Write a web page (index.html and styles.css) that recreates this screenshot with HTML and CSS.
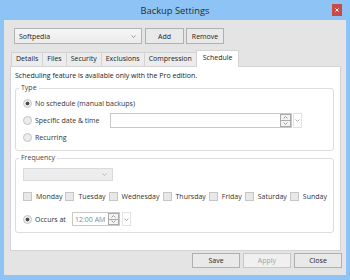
FILE: index.html
```html
<!DOCTYPE html>
<html lang="en">
<head>
    <meta charset="UTF-8">
    <title>Backup Settings</title>
    <link rel="stylesheet" href="styles.css">
</head>
<body>
    <div class="window">
        <div class="titlebar">
            <span class="title">Backup Settings</span>
            <span class="close-btn">
                <svg width="4" height="4" viewBox="0 0 4 4"><path d="M0.5 0.5 L3.5 3.5 M3.5 0.5 L0.5 3.5" stroke="#fff" stroke-width="1"/></svg>
            </span>
        </div>

        <div class="client">
            <div class="profile-row">
                <div class="combo">
                    <span>Softpedia</span>
                    <svg class="chev" width="5" height="3" viewBox="0 0 5 3"><path d="M0.5 0.5 L2.5 2.5 L4.5 0.5" fill="none" stroke="#888" stroke-width="0.8"/></svg>
                </div>
                <button class="btn btn-add">Add</button>
                <button class="btn btn-remove">Remove</button>
            </div>

            <div class="tabs">
                <div class="tab">Details</div>
                <div class="tab">Files</div>
                <div class="tab">Security</div>
                <div class="tab">Exclusions</div>
                <div class="tab">Compression</div>
                <div class="tab active">Schedule</div>
            </div>

            <div class="tab-panel">
                <p class="note">Scheduling feature is available only with the Pro edition.</p>

                <fieldset class="group type-group">
                    <legend>Type</legend>
                    <div class="opt">
                        <span class="radio checked"></span>
                        <span>No schedule (manual backups)</span>
                    </div>
                    <div class="opt">
                        <span class="radio"></span>
                        <span class="opt-label">Specific date &amp; time</span>
                        <div class="field date-field">
                            <span class="field-text"></span>
                            <span class="spin">
                                <span class="spin-half"><svg width="5" height="3" viewBox="0 0 5 3"><path d="M0.5 2.5 L2.5 0.5 L4.5 2.5" fill="none" stroke="#888" stroke-width="0.8"/></svg></span>
                                <span class="spin-half"><svg width="5" height="3" viewBox="0 0 5 3"><path d="M0.5 0.5 L2.5 2.5 L4.5 0.5" fill="none" stroke="#888" stroke-width="0.8"/></svg></span>
                            </span>
                        </div>
                        <span class="drop"><svg width="5" height="3" viewBox="0 0 5 3"><path d="M0.5 0.5 L2.5 2.5 L4.5 0.5" fill="none" stroke="#999" stroke-width="0.8"/></svg></span>
                    </div>
                    <div class="opt">
                        <span class="radio"></span>
                        <span>Recurring</span>
                    </div>
                </fieldset>

                <fieldset class="group freq-group">
                    <legend>Frequency</legend>
                    <div class="combo combo-disabled">
                        <svg class="chev" width="5" height="3" viewBox="0 0 5 3"><path d="M0.5 0.5 L2.5 2.5 L4.5 0.5" fill="none" stroke="#aaa" stroke-width="0.8"/></svg>
                    </div>
                    <div class="days">
                        <span class="day"><span class="check"></span>Monday</span>
                        <span class="day"><span class="check"></span>Tuesday</span>
                        <span class="day"><span class="check"></span>Wednesday</span>
                        <span class="day"><span class="check"></span>Thursday</span>
                        <span class="day"><span class="check"></span>Friday</span>
                        <span class="day"><span class="check"></span>Saturday</span>
                        <span class="day"><span class="check"></span>Sunday</span>
                    </div>
                    <div class="opt occurs">
                        <span class="radio checked"></span>
                        <span class="occurs-label">Occurs at</span>
                        <div class="field time-field">
                            <span class="field-text">12:00 AM</span>
                            <span class="spin">
                                <span class="spin-half"><svg width="5" height="3" viewBox="0 0 5 3"><path d="M0.5 2.5 L2.5 0.5 L4.5 2.5" fill="none" stroke="#888" stroke-width="0.8"/></svg></span>
                                <span class="spin-half"><svg width="5" height="3" viewBox="0 0 5 3"><path d="M0.5 0.5 L2.5 2.5 L4.5 0.5" fill="none" stroke="#888" stroke-width="0.8"/></svg></span>
                            </span>
                        </div>
                        <span class="drop"><svg width="5" height="3" viewBox="0 0 5 3"><path d="M0.5 0.5 L2.5 2.5 L4.5 0.5" fill="none" stroke="#999" stroke-width="0.8"/></svg></span>
                    </div>
                </fieldset>
            </div>

            <div class="footer">
                <button class="btn btn-foot">Save</button>
                <button class="btn btn-foot" disabled>Apply</button>
                <button class="btn btn-foot">Close</button>
            </div>
        </div>
    </div>
</body>
</html>
```

FILE: styles.css
```css
* {
    margin: 0;
    padding: 0;
    box-sizing: border-box;
}

body {
    font-family: 'Open Sans', 'Noto Sans', sans-serif;
    font-size: 7px;
    color: #333;
    background: #8dc3f5;
    white-space: nowrap;
}

.window {
    width: 350px;
    height: 280px;
    background: #8dc3f5;
    display: flex;
    flex-direction: column;
    position: relative;
}

.titlebar {
    height: 20px;
    display: flex;
    align-items: center;
    justify-content: center;
}

.title {
    font-size: 9.3px;
    color: #2b2b2b;
}

.close-btn {
    position: absolute;
    top: 4px;
    left: 332px;
    width: 10px;
    height: 12px;
    background: #c94b45;
    display: flex;
    align-items: center;
    justify-content: center;
}

.client {
    flex: 1;
    margin: 0 4px 5px 4px;
    background: #e4e4e4;
    display: flex;
    flex-direction: column;
}

.profile-row {
    display: flex;
    margin: 8px 0 0 10px;
    height: 16px;
}

.combo {
    width: 128px;
    height: 16px;
    border: 1px solid #b3b3b3;
    background: linear-gradient(#f6f6f6, #ebebeb);
    display: flex;
    align-items: center;
    justify-content: space-between;
    padding: 0 5px 0 4px;
    color: #222;
}

.btn {
    font-family: inherit;
    font-size: 7px;
    color: #222;
    background: #e9e9e9;
    border: 1px solid #b0b0b0;
}

.btn-add {
    width: 39px;
    margin-left: 3px;
}

.btn-remove {
    width: 38px;
    margin-left: 2px;
}

.tabs {
    display: flex;
    align-items: flex-end;
    height: 16px;
    margin: 6px 0 0 7px;
    position: relative;
    z-index: 1;
}

.tab {
    height: 14px;
    line-height: 12px;
    padding: 0 4px;
    border: 1px solid #d3d3d3;
    border-bottom: none;
    margin-right: -1px;
    background: #ececec;
    color: #222;
}

.tab.active {
    height: 17px;
    margin-bottom: -1px;
    line-height: 14px;
    background: #fff;
    padding: 0 6px;
}

.tab-panel {
    height: 185px;
    margin: 0 5px 0 6px;
    background: #fff;
    border: 1px solid #d3d3d3;
    padding: 3px 0 0 4px;
}

.note {
    line-height: 12px;
    color: #222;
}

.group {
    border: 1px solid #dddddd;
    border-radius: 3px;
    margin: 0 6px 0 0;
    padding: 1px 6px 4px 7px;
}

.group legend {
    line-height: 12px;
    padding: 0 2px;
    margin-left: -4px;
    color: #444;
}

.opt {
    display: flex;
    align-items: center;
    height: 17px;
}

.radio {
    width: 9px;
    height: 9px;
    border-radius: 50%;
    border: 1px solid #c4c4c4;
    background: #ececec;
    margin-right: 3px;
    flex-shrink: 0;
}

.radio.checked {
    background: radial-gradient(circle, #4a4a4a 0, #4a4a4a 1.6px, #ececec 2.2px);
}

.opt-label {
    width: 75px;
}

.field {
    height: 15px;
    border: 1px solid #c8c8c8;
    background: #fff;
    display: flex;
    align-items: center;
    justify-content: space-between;
}

.date-field {
    width: 182px;
}

.field-text {
    padding-left: 2px;
    color: #8a8a8a;
}

.spin {
    width: 11px;
    height: 13px;
    display: flex;
    flex-direction: column;
}

.spin-half {
    flex: 1;
    display: flex;
    align-items: center;
    justify-content: center;
    border: 1px solid #aaa;
    background: #f4f4f4;
}

.spin-half + .spin-half {
    border-top: none;
}

.drop {
    width: 9px;
    height: 15px;
    margin-left: 1px;
    border: 1px solid #e2e2e2;
    display: flex;
    align-items: center;
    justify-content: center;
}

.freq-group {
    margin-top: 1px;
    padding: 4px 6px 5px 7px;
}

.combo-disabled {
    width: 90px;
    height: 13px;
    background: #ededed;
    border-color: #dadada;
    justify-content: flex-end;
}

.days {
    display: flex;
    align-items: center;
    height: 14px;
    margin-top: 8px;
    gap: 3px;
}

.day {
    display: flex;
    align-items: center;
    gap: 4px;
}

.check {
    width: 9px;
    height: 9px;
    border: 1px solid #c6c6c6;
    background: #e8e8e8;
}

.occurs {
    height: 16px;
    margin-top: 8px;
}

.occurs-label {
    width: 37px;
}

.time-field {
    width: 48px;
    height: 14px;
}

.time-field .spin {
    height: 12px;
}

.time-field + .drop {
    height: 14px;
    margin-left: 2px;
}

.footer {
    display: flex;
    justify-content: flex-end;
    gap: 3px;
    margin: 2px 4px 0 0;
}

.btn-foot {
    width: 48px;
    height: 15px;
}

.btn-foot:disabled {
    background: #f0f0f0;
    border-color: #c8c8c8;
    color: #a3a3a3;
}
```
